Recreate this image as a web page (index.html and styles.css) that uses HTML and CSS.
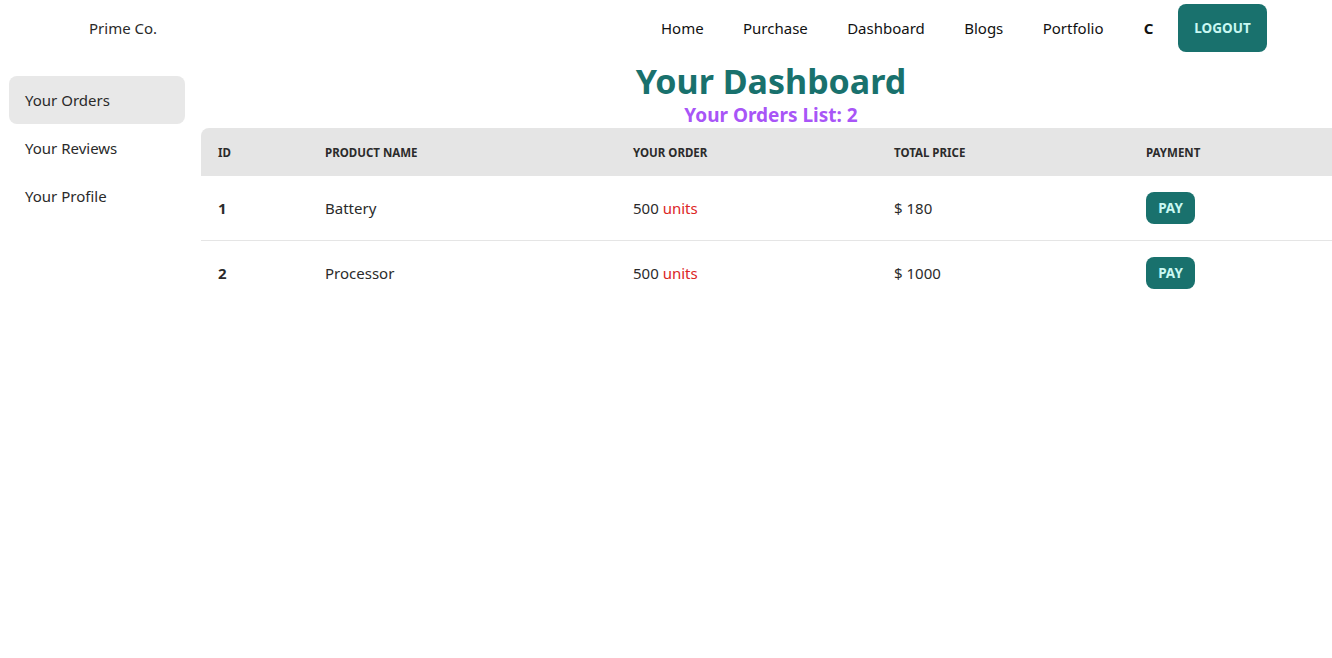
FILE: index.html
```html
<!DOCTYPE html>
<html lang="en">
<head>
<meta charset="utf-8">
<title>Prime Co. Dashboard</title>
<link rel="stylesheet" href="styles.css">
</head>
<body>
<header class="navbar">
  <a class="logo" href="#">Prime Co.</a>
  <nav class="menu">
    <a href="#">Home</a>
    <a href="#">Purchase</a>
    <a href="#">Dashboard</a>
    <a href="#">Blogs</a>
    <a href="#">Portfolio</a>
    <a href="#" class="user">C</a>
    <button class="btn btn-logout">LOGOUT</button>
  </nav>
</header>
<div class="layout">
  <aside class="sidebar">
    <a href="#" class="side-item active">Your Orders</a>
    <a href="#" class="side-item">Your Reviews</a>
    <a href="#" class="side-item">Your Profile</a>
  </aside>
  <main class="content">
    <div class="titles">
      <h1 class="title">Your Dashboard</h1>
      <h2 class="subtitle">Your Orders List: 2</h2>
    </div>
    <table class="orders">
      <thead>
        <tr>
          <th class="c-id">ID</th>
          <th class="c-name">Product Name</th>
          <th class="c-order">Your Order</th>
          <th class="c-price">Total Price</th>
          <th class="c-pay">Payment</th>
        </tr>
      </thead>
      <tbody>
        <tr>
          <td class="id">1</td>
          <td>Battery</td>
          <td>500 <span class="units">units</span></td>
          <td>$ 180</td>
          <td><button class="btn btn-pay">PAY</button></td>
        </tr>
        <tr>
          <td class="id">2</td>
          <td>Processor</td>
          <td>500 <span class="units">units</span></td>
          <td>$ 1000</td>
          <td><button class="btn btn-pay">PAY</button></td>
        </tr>
      </tbody>
    </table>
  </main>
</div>
</body>
</html>
```

FILE: styles.css
```css
* { box-sizing: border-box; }
html, body {
  margin: 0;
  padding: 0;
  background: #ffffff;
  font-family: "Noto Sans", "Open Sans", sans-serif;
  color: #1f2329;
  overflow-x: hidden;
}
a { text-decoration: none; color: inherit; }

.navbar {
  height: 56px;
  display: flex;
  align-items: center;
  justify-content: space-between;
  padding: 0 65px 0 89px;
}
.logo {
  font-size: 15px;
  color: #2a2a2a;
}
.menu {
  display: flex;
  align-items: center;
}
.menu a {
  padding: 0 19.7px;
  font-size: 15px;
  color: #111;
  line-height: 48px;
}
.menu a.user {
  font-weight: 700;
  padding-left: 20.5px;
}
.btn {
  border: 0;
  font-family: inherit;
  font-weight: 700;
  color: #c9f8f2;
  background: #19716d;
  border-radius: 8px;
  cursor: pointer;
}
.btn-logout {
  margin-left: 5px;
  width: 89px;
  height: 48px;
  font-size: 13.5px;
}

.layout {
  display: flex;
  align-items: flex-start;
}
.sidebar {
  width: 201px;
  flex: none;
  padding: 20px 16px 0 9px;
  display: flex;
  flex-direction: column;
}
.side-item {
  display: block;
  height: 48px;
  line-height: 48px;
  padding-left: 16px;
  border-radius: 8px;
  font-size: 15px;
  color: #2a2a2a;
}
.side-item.active {
  background: #e8e8e8;
}

.content {
  flex: 1;
  min-width: 0;
}
.titles {
  padding-left: 9px;
  text-align: center;
}
.title {
  margin: 0;
  padding-top: 5px;
  font-size: 34px;
  line-height: 40px;
  font-weight: 700;
  color: #19716d;
}
.subtitle {
  margin: 0;
  height: 27px;
  padding-top: 1px;
  font-size: 19px;
  line-height: 26px;
  font-weight: 700;
  color: #a855f7;
}

.orders {
  width: 1140px;
  border-collapse: separate;
  border-spacing: 0;
  text-align: left;
}
.orders th {
  height: 48px;
  padding: 0 16px;
  background: #e5e5e5;
  font-size: 11.5px;
  font-weight: 700;
  text-transform: uppercase;
  color: #2b2b2b;
}
.orders th.c-id { border-top-left-radius: 8px; width: 108px; padding-left: 17px; }
.orders th.c-name { width: 308px; }
.orders th.c-order { width: 261px; }
.orders th.c-price { width: 252px; }
.orders td {
  height: 65px;
  padding: 0 16px;
  font-size: 15px;
  color: #2b2b2b;
  border-bottom: 1px solid #e5e5e5;
}
.orders tbody tr:last-child td { border-bottom: 0; height: 64px; }
.orders td.id { font-weight: 700; padding-left: 17px; }
.units { color: #dc2626; }
.btn-pay {
  width: 49px;
  height: 32px;
  font-size: 13.5px;
}
```
